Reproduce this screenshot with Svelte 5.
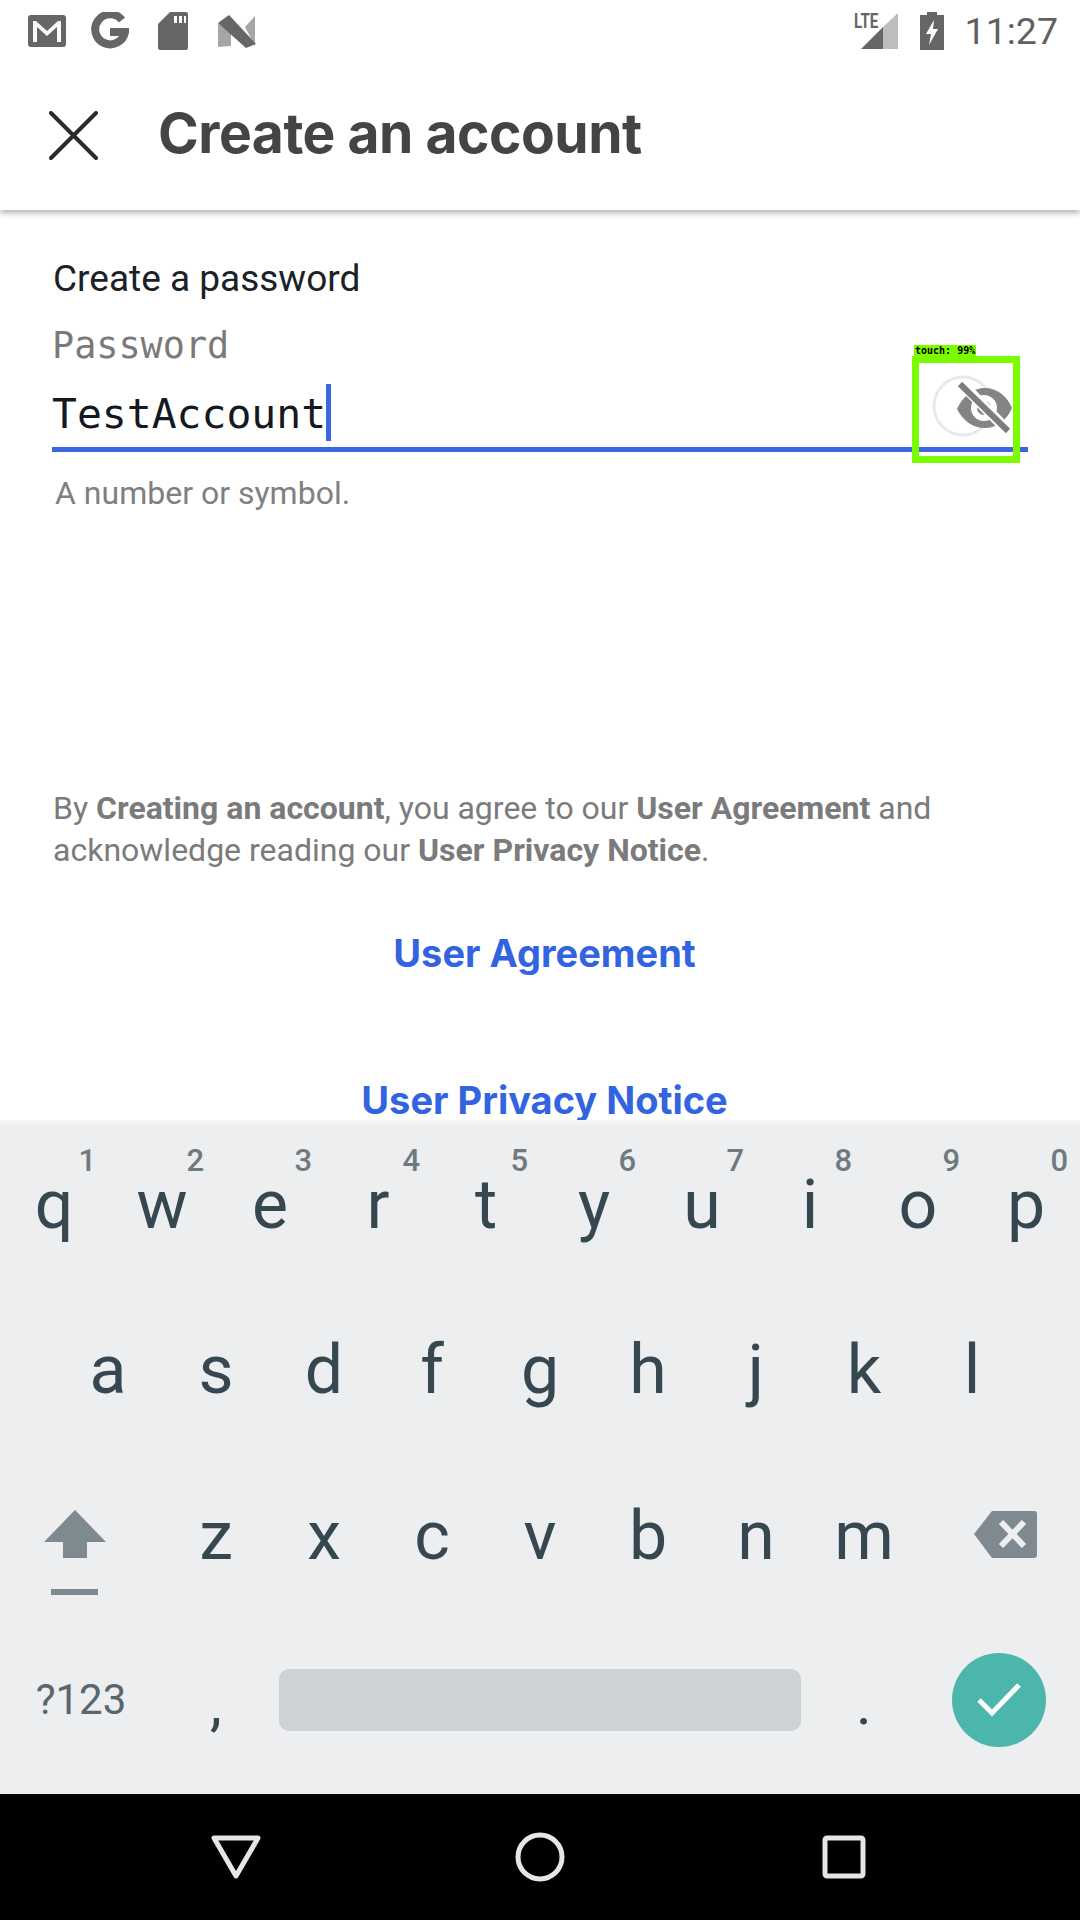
<script>
  const row1 = [["q","1"],["w","2"],["e","3"],["r","4"],["t","5"],["y","6"],["u","7"],["i","8"],["o","9"],["p","0"]];
  const row2 = ["a","s","d","f","g","h","j","k","l"];
  const row3 = ["z","x","c","v","b","n","m"];
</script>

<div class="phone">
  <div class="status">
    <div class="status-left">
      <svg class="ic-gmail" width="38" height="32" viewBox="0 0 38 32">
        <rect width="38" height="32" rx="3" fill="#666"/>
        <path d="M5 27V6h3l11 10L30 6h3v21h-4V12L19 21 9 12v15z" fill="#fafafa"/>
      </svg>
      <svg class="ic-g" width="38" height="38" viewBox="0 0 38 38">
        <path d="M31 8A15 15 0 1 0 34 20H19" fill="none" stroke="#666" stroke-width="8"/>
      </svg>
      <svg class="ic-sd" width="30" height="38" viewBox="0 0 30 38">
        <path d="M12 0h16a2 2 0 0 1 2 2v34a2 2 0 0 1-2 2H2a2 2 0 0 1-2-2V12z" fill="#666"/>
        <path d="M16 4h3v7h-3zM21 4h3v7h-3zM26 4h2v7h-2z" fill="#fff"/>
      </svg>
      <svg class="ic-n" width="38" height="33" viewBox="0 0 38 33">
        <path d="M0 8 13 18v13L0 32z" fill="#a6a6a6"/>
        <path d="M27 12 37 1v30z" fill="#a6a6a6"/>
        <path d="M0 8 11 0l27 29-10 4z" fill="#666"/>
      </svg>
    </div>
    <div class="status-right">
      <div class="signal">
        <span class="lte">LTE</span>
        <svg width="38" height="37" viewBox="0 0 38 37">
          <path d="M0 36 22 14v22z" fill="#666"/>
          <path d="M22 14 37 0v36H22z" fill="#bdbdbd"/>
        </svg>
      </div>
      <svg class="battery" width="24" height="38" viewBox="0 0 24 38">
        <path d="M7 0h10v3h7v35H0V3h7z" fill="#666"/>
        <path d="M14 8 6 22h5l-2 11 9-16h-5z" fill="#fff"/>
      </svg>
      <span class="time">11:27</span>
    </div>
  </div>

  <header class="appbar">
    <svg class="close" width="50" height="50" viewBox="0 0 50 50">
      <path d="M2 2 47 47M47 2 2 47" stroke="#2b2b2b" stroke-width="4" stroke-linecap="round"/>
    </svg>
    <h1>Create an account</h1>
  </header>

  <main class="content">
    <div class="form">
      <h2>Create a password</h2>
      <div class="label">Password</div>
      <div class="field">
        <span class="value">TestAccount</span><span class="caret"></span>
        <div class="detect">
          <span class="detect-tag">touch: 99%</span>
          <svg width="94" height="93" viewBox="0 0 94 93">
            <circle cx="44" cy="43" r="29" fill="none" stroke="#e8e8f2" stroke-width="3"/>
            <path d="M38 46c6-13 16-21 28-21 12 0 22 8 27 20-5 12-15 20-27 20-12 0-22-7-28-19z" fill="#848484"/>
            <circle cx="65" cy="45" r="13" fill="#fff"/>
            <circle cx="65" cy="45" r="7" fill="#848484"/>
            <path d="M41 19 91 70" stroke="#fff" stroke-width="11"/>
            <path d="M41 21 89 68" stroke="#7d7d7d" stroke-width="6"/>
          </svg>
        </div>
      </div>
      <p class="hint">A number or symbol.</p>
    </div>

    <p class="legal">By <b>Creating an account</b>, you agree to our <b>User Agreement</b> and<br>acknowledge reading our <b>User Privacy Notice</b>.</p>

    <div class="links">
      <span>User Agreement</span>
      <span>User Privacy Notice</span>
    </div>
  </main>

  <section class="keyboard">
    <div class="row">
      {#each row1 as [letter, digit]}
        <div class="key"><span class="digit">{digit}</span>{letter}</div>
      {/each}
    </div>
    <div class="row row-inset">
      {#each row2 as letter}
        <div class="key">{letter}</div>
      {/each}
    </div>
    <div class="row">
      <div class="key wide">
        <svg class="shift" width="64" height="86" viewBox="0 0 64 86">
          <path d="M32 0 63 32H44v16H20V32H1z" fill="#7e8a90"/>
          <rect x="8" y="79" width="47" height="6" fill="#7e8a90"/>
        </svg>
      </div>
      {#each row3 as letter}
        <div class="key">{letter}</div>
      {/each}
      <div class="key wide">
        <svg class="backspace" width="64" height="48" viewBox="0 0 64 48">
          <path d="M18 0h42a3 3 0 0 1 3 3v41a3 3 0 0 1-3 3H18L0 23z" fill="#7e8a90"/>
          <path d="M27 11 50 35M50 11 27 35" stroke="#eceef0" stroke-width="6"/>
        </svg>
      </div>
    </div>
    <div class="row bottom">
      <div class="key wide sym">?123</div>
      <div class="key punct">,</div>
      <div class="space"></div>
      <div class="key punct">.</div>
      <div class="key wide">
        <div class="enter">
          <svg width="46" height="38" viewBox="0 0 46 38">
            <path d="M3 19 16 32 43 4" fill="none" stroke="#fff" stroke-width="5"/>
          </svg>
        </div>
      </div>
    </div>
  </section>

  <nav class="navbar">
    <svg width="50" height="44" viewBox="0 0 50 44">
      <path d="M3 3h44L25 41z" fill="none" stroke="#e6e6e6" stroke-width="5" stroke-linejoin="round"/>
    </svg>
    <svg class="home" width="50" height="50" viewBox="0 0 50 50">
      <circle cx="25" cy="25" r="22" fill="none" stroke="#e6e6e6" stroke-width="5"/>
    </svg>
    <svg width="44" height="44" viewBox="0 0 44 44">
      <rect x="3" y="3" width="38" height="38" rx="2" fill="none" stroke="#e6e6e6" stroke-width="5"/>
    </svg>
  </nav>
</div>

<style>
  :global(body) {
    margin: 0;
    background: #fff;
  }

  .phone {
    width: 1080px;
    height: 1920px;
    display: flex;
    flex-direction: column;
    overflow: hidden;
    font-family: Roboto, sans-serif;
  }

  .status {
    height: 62px;
    flex: none;
    display: flex;
    justify-content: space-between;
    align-items: center;
    padding: 0 22px 0 28px;
    position: relative;
    z-index: 2;
    background: #fff;
  }

  .status-left,
  .status-right {
    display: flex;
    align-items: center;
  }

  .status-left {
    gap: 24px;
  }

  .ic-g {
    margin: 0 5px 0 1px;
  }

  .ic-sd {
    margin-right: 6px;
  }

  .signal {
    display: flex;
    align-items: flex-end;
    position: relative;
    width: 45px;
    height: 38px;
    justify-content: flex-end;
  }

  .lte {
    position: absolute;
    left: 0;
    top: -3px;
    font-size: 21px;
    font-weight: 700;
    color: #666;
    transform: scaleX(0.72);
    transform-origin: left top;
  }

  .battery {
    margin-left: 21px;
  }

  .time {
    margin-left: 21px;
    font-size: 37.5px;
    color: #616161;
  }

  .appbar {
    height: 148px;
    flex: none;
    display: flex;
    align-items: center;
    padding-left: 49px;
    background: #fff;
    box-shadow: 0 3px 6px rgba(0, 0, 0, 0.3);
    position: relative;
    z-index: 1;
  }

  h1 {
    margin: 0 0 6px 59px;
    font-family: Inter, sans-serif;
    font-size: 55.2px;
    font-weight: 700;
    letter-spacing: -0.5px;
    color: #444;
  }

  .content {
    flex: 1;
    min-height: 0;
    overflow: hidden;
    padding: 47px 52px 0 53px;
  }

  h2 {
    margin: 0;
    font-size: 37px;
    line-height: 44px;
    font-weight: 400;
    color: #1a2127;
  }

  .label {
    margin: 23px 0 0 -1px;
    font-family: "DejaVu Sans Mono", monospace;
    font-size: 36.8px;
    line-height: 44px;
    color: #7a7a7a;
  }

  .field {
    position: relative;
    height: 58px;
    margin-top: 21px;
    margin-left: -1px;
    display: flex;
    align-items: flex-start;
    border-bottom: 5px solid #3a66e0;
  }

  .value {
    font-family: "DejaVu Sans Mono", monospace;
    font-size: 41.4px;
    line-height: 50px;
    color: #14191f;
  }

  .caret {
    width: 5px;
    height: 57px;
    margin-top: -5px;
    background: #3a66e0;
  }

  .detect {
    position: absolute;
    left: 860px;
    top: -33px;
    width: 94px;
    height: 93px;
    border: 7px solid #7cfc00;
    display: flex;
  }

  .detect-tag {
    position: absolute;
    left: -5px;
    top: -18px;
    height: 12px;
    padding: 0 1px;
    background: #7cfc00;
    font-family: "DejaVu Sans Mono", monospace;
    font-size: 10px;
    font-weight: 700;
    line-height: 12px;
    color: #000;
    white-space: nowrap;
  }

  .hint {
    margin: 21px 0 0 2px;
    font-size: 32px;
    line-height: 40px;
    color: #808080;
  }

  .legal {
    margin: 274px 0 0;
    font-size: 32px;
    line-height: 42px;
    color: #7b7b7b;
  }

  .links {
    display: flex;
    flex-direction: column;
    align-items: center;
    gap: 103px;
    margin: 60px -8px 0 0;
    font-family: Inter, sans-serif;
    font-size: 38px;
    line-height: 44px;
    font-weight: 700;
    color: #3364e0;
  }

  .keyboard {
    height: 674px;
    flex: none;
    display: flex;
    flex-direction: column;
    background: linear-gradient(#f8f9fa, #eceef0 6px);
    position: relative;
  }

  .row {
    height: 166.5px;
    display: flex;
    font-size: 68px;
    color: #37474f;
  }

  .row-inset {
    padding-left: 54px;
  }

  .key {
    width: 108px;
    flex: none;
    position: relative;
    display: flex;
    justify-content: center;
    align-items: center;
  }

  .wide {
    width: 162px;
    flex: none;
  }

  .row:first-child .key {
    padding-top: 4px;
  }

  .digit {
    position: absolute;
    top: 22px;
    right: 12px;
    font-size: 31px;
    font-weight: 500;
    color: #6f7a80;
  }

  .row:nth-child(3) .wide:first-child {
    width: 150px;
    margin-right: 12px;
  }

  .row:nth-child(3) .wide:last-child {
    padding-left: 14px;
    box-sizing: border-box;
  }

  .shift {
    margin-top: 34px;
  }

  .backspace {
    margin-bottom: 2px;
  }

  .bottom {
    height: 174.5px;
    align-items: center;
    padding-bottom: 14px;
    box-sizing: border-box;
  }

  .sym {
    font-size: 42px;
    color: #58666d;
  }

  .punct {
    padding-top: 8px;
    font-size: 60px;
    line-height: 60px;
  }

  .space {
    width: 522px;
    height: 62px;
    flex: none;
    margin: 0 9px;
    background: #cfd2d5;
    border-radius: 10px;
  }

  .enter {
    width: 94px;
    height: 94px;
    border-radius: 50%;
    background: #4db6ac;
    display: flex;
    justify-content: center;
    align-items: center;
  }

  .navbar {
    height: 126px;
    flex: none;
    background: #000;
    display: flex;
    align-items: center;
    justify-content: space-between;
    padding: 0 214px 0 211px;
  }

  .home {
    margin-right: 3px;
  }
</style>
